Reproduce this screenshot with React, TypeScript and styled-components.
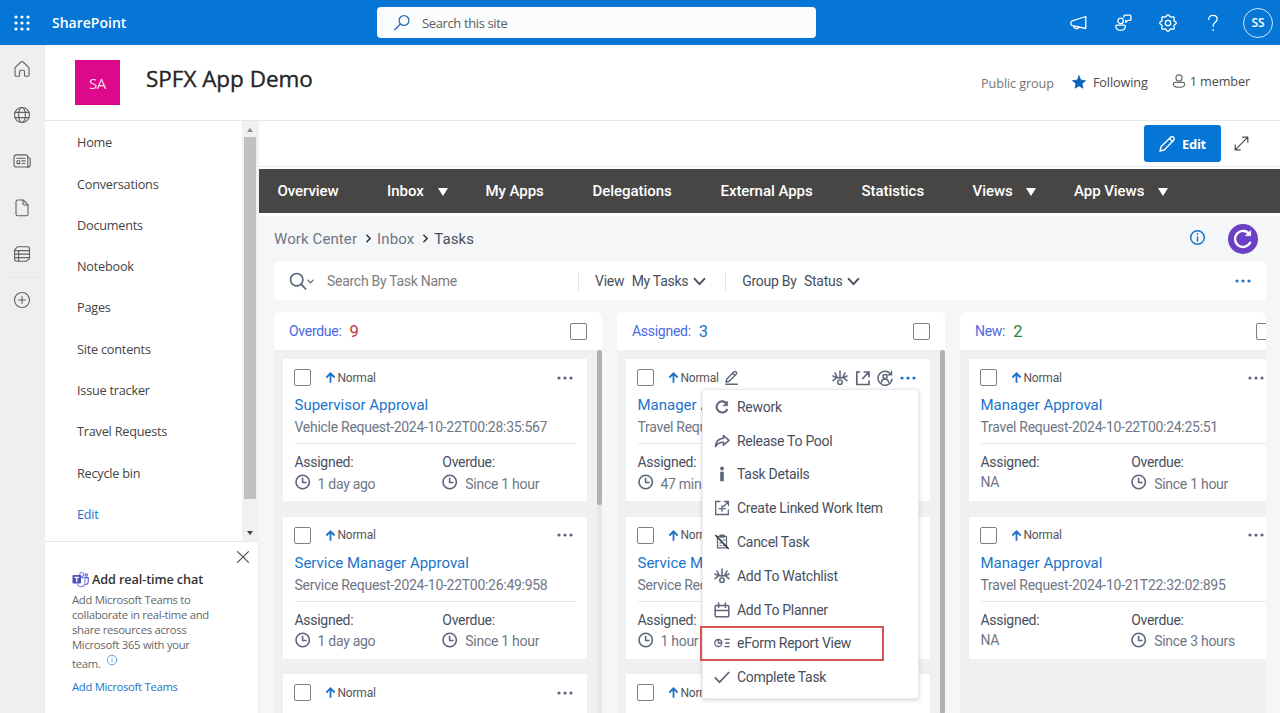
import React, {FC, ReactNode} from "react";
import styled, {createGlobalStyle, css, ThemeProvider} from "styled-components";

const theme = {
    color: {
        brand: "#0575d6",
        link: "#1b74c9",
        text: "#484f60",
        muted: "#6f7685",
        icon: "#5c657b",
        line: "#e6e7e9",
        canvas: "#f5f6f8",
        lane: "#eff0f2",
    },
    font: {
        shell: `"Open Sans", "Noto Sans", sans-serif`,
        body: `Roboto, "Liberation Sans", sans-serif`,
    },
};

const GlobalStyle = createGlobalStyle`
    * {
        box-sizing: border-box;
    }

    body {
        margin: 0;
        background: #fff;
        overflow: hidden;
    }
`;

/* ---------- icons ---------- */

interface IconProps {
    size?: number;
    width?: number;
    view?: number;
    children?: ReactNode;
}

const Svg = styled.svg`
    display: block;
    flex: none;
    fill: none;
    stroke: currentColor;
    stroke-linecap: round;
    stroke-linejoin: round;
`;

const Icon: FC<IconProps> = ({size = 18, width = 1.1, view = 18, children}) => (
    <Svg width={size} height={size} viewBox={`0 0 ${view} ${view}`} strokeWidth={width}>
        {children}
    </Svg>
);

const WaffleIcon = () => (
    <Icon>
        {[3, 9, 15].map(y => [3, 9, 15].map(x => (
            <circle key={`${x}-${y}`} cx={x} cy={y} r={1.6} fill="currentColor" stroke="none" />
        )))}
    </Icon>
);

const HomeIcon = () => (
    <Icon>
        <path d="M2 7.6 7.9 2q1.1-.9 2.2 0L16 7.6V15q0 1.3-1.3 1.3h-2q-1.2 0-1.2-1.3v-3.2q0-1.6-1.5-1.6H8q-1.5 0-1.5 1.6V15q0 1.3-1.2 1.3h-2Q2 16.3 2 15Z" />
    </Icon>
);

const GlobeIcon = () => (
    <Icon>
        <circle cx="9" cy="9" r="7.5" />
        <ellipse cx="9" cy="9" rx="3.4" ry="7.5" />
        <path d="M2 6.4h14M2 11.6h14" />
    </Icon>
);

const NewsIcon = () => (
    <Icon>
        <path d="M3.6 2.9h9.2q2 0 2 2v8.4q0 1.7 1.1 1.7h-12Q1 15 1 12.8V5q0-2.1 2.6-2.1Z" />
        <path d="M14.8 5.2q2.4 0 2.4 2v5.2q0 2.6-2.5 2.6M3.8 6.3h8.2M9 8.9h3M9 11.5h3" />
        <rect x="4" y="8.8" width="2.8" height="2.8" />
    </Icon>
);

const FileIcon = () => (
    <Icon>
        <path d="M4.8 1h5.4l4.8 4.8V15q0 1.8-1.8 1.8H4.8Q3 16.8 3 15V2.8Q3 1 4.8 1Z" />
        <path d="M10 1.2v3.4q0 1.4 1.4 1.4h3.4" />
    </Icon>
);

const ListIcon = () => (
    <Icon>
        <path d="M4.5 1.8h9.8q2.2 0 2.2 2.2v9.4l-2.8 2.8H4q-2.4 0-2.4-2.4V4.7Z" />
        <path d="M1.8 5.6h14.6M1.8 9.1h14.6M1.8 12.6h14.6M5.6 5.6v10.4" />
    </Icon>
);

const PlusIcon = () => (
    <Icon>
        <circle cx="9" cy="9" r="7.5" />
        <path d="M9 5.6v6.8M5.6 9h6.8" />
    </Icon>
);

const MegaphoneIcon = () => (
    <Icon width={1.3}>
        <path d="M16.8 2.5v12L3.2 11.6Q1.8 11.2 1.8 9.4t1.4-2.6Z" />
        <path d="M5 12.1q.1 2.7 2.3 2.7 1.8 0 2.6-1.8" />
    </Icon>
);

const FeedbackIcon = () => (
    <Icon width={1.3}>
        <circle cx="6.6" cy="6.9" r="2.7" />
        <path d="M2.6 11.2h7.8q1 0 1 1.1 0 4-4.8 4t-4.8-4q0-1.1.8-1.1ZM9.9 3V2.2q0-1 1-1h5q1 0 1 1v3.2q0 1-1 1h-2l-2.2 1.8V6.3" />
    </Icon>
);

const gearPoints = Array.from({length: 32}, (_, i) => {
    const radius = i % 4 < 2 ? 8.2 : 6.6;
    const angle = (i - 0.5) * Math.PI / 16;
    return `${(9 + radius * Math.cos(angle)).toFixed(2)},${(9 + radius * Math.sin(angle)).toFixed(2)}`;
}).join(" ");

const GearIcon = () => (
    <Icon width={1.3}>
        <circle cx="9" cy="9" r="2.7" />
        <polygon points={gearPoints} />
    </Icon>
);

const HelpIcon = () => (
    <Icon width={1.3}>
        <path d="M4.7 5.4Q4.9 1.3 9 1.3T13.2 5q0 1.7-1.9 3.2T9.2 11v1.2" />
        <circle cx="9.2" cy="15.9" r=".9" fill="currentColor" stroke="none" />
    </Icon>
);

const LoupeIcon = () => (
    <Icon width={1.3}>
        <circle cx="11" cy="6.5" r="4.9" />
        <path d="M7.4 10 1.8 15.7" />
    </Icon>
);

const StarIcon = () => (
    <Icon size={14}>
        <path fill="currentColor" d="m9 1.2 2.3 5.5 6 .5-4.5 3.9 1.3 5.8L9 13.8l-5.1 3.1 1.3-5.8L.7 7.2l6-.5Z" />
    </Icon>
);

const MemberIcon = () => (
    <Icon size={14} width={1.4}>
        <circle cx="9" cy="5" r="3.9" />
        <path d="M4.3 10.8h9.4q2.6 0 2.6 1.9 0 4.4-7.3 4.4t-7.3-4.4q0-1.9 2.6-1.9Z" />
    </Icon>
);

const PencilIcon = () => (
    <Icon width={1.4}>
        <path d="m2 16 1-4.2L12.9 2q1.3-1 2.6.2 1.3 1.3.4 2.7L6.2 15ZM11.5 3.6l3 3" />
    </Icon>
);

const ExpandIcon = () => (
    <Icon size={17} width={1.2}>
        <path d="M2.5 15.5 15.5 2.5M10.3 2.3h5.4v5.4M2.3 10.3v5.4h5.4" />
    </Icon>
);

const CloseIcon = () => (
    <Icon size={14} width={1.4}>
        <path d="m2 2 14 14M16 2 2 16" />
    </Icon>
);

const InfoIcon: FC<{size?: number; width?: number}> = ({size = 17, width = 1.6}) => (
    <Icon size={size} width={width}>
        <circle cx="9" cy="9" r="7.2" />
        <path d="M9 8.4v4.2M9 5.4v.1" />
    </Icon>
);

const TeamsIcon = () => (
    <Icon size={17}>
        <circle cx="10.3" cy="3.6" r="2.1" stroke="#7b83eb" />
        <circle cx="15.1" cy="4.2" r="1.3" stroke="#5059c9" />
        <path stroke="#5059c9" d="M13.5 7h3.7v4.3q0 2.6-2.8 2.9" />
        <path stroke="#7b83eb" d="M9 7h4.7v5.6q-.3 4-4.2 4-2.8 0-3.9-2.2" />
        <rect x=".5" y="4.3" width="9" height="9" rx="1" fill="#4b53bc" stroke="none" />
        <path stroke="#fff" strokeWidth={1.3} d="M3 6.7h4M5 6.7v4.3" />
    </Icon>
);

const RefreshIcon = () => (
    <Icon size={22} view={22} width={2.3}>
        <path d="M17.5 6.2A8 8 0 1 0 18.2 14.6" />
        <path d="M18.6 3v4.7h-4.8Z" fill="currentColor" strokeWidth={0.8} />
    </Icon>
);

const FilterLoupeIcon = () => (
    <Icon size={18} width={1.7}>
        <circle cx="7.7" cy="7.7" r="6.2" />
        <path d="m12.2 12.2 4.3 4.6" />
    </Icon>
);

const ChevronIcon: FC<{size: number; width: number}> = ({size, width}) => (
    <Icon size={size} width={width} view={12}>
        <path d="m1.5 3.5 4.5 5 4.5-5" />
    </Icon>
);

const CrumbIcon = () => (
    <Icon size={9} width={1.7} view={10}>
        <path d="m3.2 1.3 3.7 3.7-3.7 3.7" />
    </Icon>
);

const ArrowUpIcon = () => (
    <Icon size={11} width={2} view={12}>
        <path strokeLinecap="butt" strokeLinejoin="miter" d="M6 11.8V1.8M1.5 6 6 1.5 10.5 6" />
    </Icon>
);

const ClockIcon = () => (
    <Icon size={16} width={1.6} view={16}>
        <circle cx="7.7" cy="8" r="6.7" />
        <path strokeLinecap="butt" d="M7.6 3.8v4.7h4" />
    </Icon>
);

const DotsIcon = () => (
    <Icon size={16} view={16}>
        {[2, 8, 14].map(x => <circle key={x} cx={x} cy={8} r={1.6} fill="currentColor" stroke="none" />)}
    </Icon>
);

const EditIcon = () => (
    <Icon size={15} width={1.5} view={16}>
        <path d="M2.2 12.3 3 9.5 10.7 1.8q.9-.7 1.8.1l.7.8q.8.9 0 1.7L5.5 12l-3.3.8ZM9.3 3.3l2.6 2.6M2 15.2h12.3" />
    </Icon>
);

const WatchIcon = () => (
    <Icon size={16} width={1.5} view={16}>
        <path d="M1 6q3.200 2 7 2t7-2M8 1v6.500M3 3l1.900 3.600M13 3l-1.900 3.600M1 10.600l2.600-2M15 10.600l-2.600-2" />
        <circle cx="8" cy="12.300" r="2.200" />
    </Icon>
);

const OpenIcon = () => (
    <Icon size={16} width={1.7} view={16}>
        <path strokeLinejoin="miter" strokeLinecap="butt" d="M5.3 2H1.8v12.5H14V10.5M7.3 9l6-6.3M8.6 2h5.4v5.3" />
    </Icon>
);

const ReassignIcon = () => (
    <Icon size={16} width={1.5} view={16}>
        <path d="M13.8 4.2A7 7 0 1 0 15 9.2M14.5 1.3v3.500H11" />
        <circle cx="8" cy="6.500" r="2" />
        <path d="M4.500 12.300q.3-3.300 3.500-3.300t3.500 3.300" />
    </Icon>
);

const ReworkIcon = () => (
    <Icon size={16} width={2.1} view={16}>
        <path d="M12.7 4.6A5.6 5.6 0 1 0 13.4 10" strokeLinecap="butt" />
        <path d="M13.6 2.3v4.5H9.2Z" fill="currentColor" strokeWidth={0.6} />
    </Icon>
);

const ReleaseIcon = () => (
    <Icon size={16} width={1.6} view={16}>
        <path d="M9.5 2.5 15 7.3l-5.5 4.8V9.3Q4.5 9 1.5 13.5 2 6 9.5 5.3Z" />
    </Icon>
);

const DetailsIcon = () => (
    <Icon size={16} view={16}>
        <circle cx="8" cy="2.5" r="1.9" fill="currentColor" stroke="none" />
        <path d="M6.2 5.7h3.6v9.6H6.2Z" fill="currentColor" stroke="none" />
    </Icon>
);

const LinkedIcon = () => (
    <Icon size={16} width={1.3} view={16}>
        <path strokeLinejoin="miter" d="M6 1.5H1.7v13h12.6V9.8M8 5.3v6M5 8.7h6.3M9.6 6.5l4.3-4.4M10.4 1.5h4v4" />
    </Icon>
);

const CancelIcon = () => (
    <Icon size={16} width={1.2} view={16}>
        <path d="M4 2.3h8.5v11.5H3.5V2.3M6 1.2h4.2v2H6ZM5.8 6h1M9 6h2M5.8 8.8h1.5M5.8 11.5h1M9 11.5h1.5" />
        <path stroke="#2f3542" strokeWidth={1.6} d="M1.8 1.5 14.3 14.5" />
    </Icon>
);

const PlannerIcon = () => (
    <Icon size={16} width={1.5} view={16}>
        <rect x="1.2" y="3.5" width="13.6" height="11.3" rx="1" />
        <path d="M1.2 8.6h13.6M4.6 1v4.6M11.4 1v4.6" />
    </Icon>
);

const ReportIcon = () => (
    <Icon size={16} width={1.3} view={16}>
        <circle cx="4.3" cy="8" r="3.5" />
        <path d="M4.3 4.8V8h3.2M11 4.3h4.2M11.8 8h3.4M11 11.7h4.2" />
    </Icon>
);

const CheckIcon = () => (
    <Icon size={16} width={1.7} view={16}>
        <path strokeLinecap="butt" strokeLinejoin="miter" d="m.8 8.3 4.7 4.9L15.2 3" />
    </Icon>
);

/* ---------- shell ---------- */

const Page = styled.div`
    display: grid;
    grid-template-columns: 45px 1fr;
    grid-template-rows: 45px 668px;
    width: 1280px;
    height: 713px;
    overflow: hidden;
    font-family: ${props => props.theme.font.shell};
    color: #333;
`;

const SuiteBar = styled.header`
    grid-column: 1 / 3;
    display: flex;
    align-items: center;
    padding: 0 7px 0 13px;
    background: ${props => props.theme.color.brand};
    color: #fff;
`;

const Brand = styled.div`
    width: 325px;
    margin-left: 21px;
    font-size: 14px;
    font-weight: 600;
`;

const SiteSearch = styled.div`
    display: flex;
    align-items: center;
    gap: 11px;
    width: 439px;
    height: 31px;
    padding-left: 16px;
    border-radius: 4px;
    background: #fafcfe;
    color: #2b6cb0;

    span {
        color: #5c5c5c;
        font-size: 13px;
        letter-spacing: -0.38px;
    }
`;

const SuiteActions = styled.div`
    display: flex;
    align-items: center;
    gap: 27px;
    margin-left: auto;
`;

const Avatar = styled.div`
    display: grid;
    place-items: center;
    width: 30px;
    height: 30px;
    margin-left: -6px;
    border: 1px solid #d5e7f8;
    border-radius: 50%;
    font-size: 12px;
    font-weight: 600;
`;

const Rail = styled.aside`
    display: flex;
    flex-direction: column;
    align-items: center;
    gap: 28.2px;
    padding: 15px 1px 0 0;
    background: #efefef;
    color: #616161;
`;

const RailBreak = styled.hr`
    width: 35px;
    margin: -14px 0 -15.2px;
    border: 0;
    border-top: 1px solid #e6e6e6;
`;

const Site = styled.div`
    display: grid;
    grid-template-rows: 76px 592px;
    min-width: 0;
`;

const SiteHeader = styled.div`
    display: flex;
    align-items: center;
    padding: 0 30px;
    border-bottom: 1px solid #e8e8e8;
`;

const SiteLogo = styled.div`
    display: grid;
    place-items: center;
    width: 45px;
    height: 45px;
    background: #dc0a8b;
    color: #fbd9ee;
    font-size: 15px;
    letter-spacing: -0.3px;
`;

const SiteTitle = styled.h1`
    margin: -8px auto 0 26px;
    color: #252525;
    font-size: 22.5px;
    font-weight: 500;
    letter-spacing: -0.03px;
    -webkit-text-stroke: 0.35px currentColor;
`;

const SiteMeta = styled.div<{$gap?: number; $left?: number; $shift?: number}>`
    display: flex;
    align-items: center;
    gap: ${props => props.$gap ?? 0}px;
    margin-left: ${props => props.$left ?? 0}px;
    padding-bottom: ${props => props.$shift ?? 0}px;
    color: #4a4a4a;
    font-size: 12.7px;
    letter-spacing: -0.12px;
    white-space: nowrap;

    svg {
        color: ${props => props.$gap === 7 ? "#0b62b8" : "#666"};
    }

    &:nth-of-type(2) {
        color: #767676;
    }
`;

const Columns = styled.div`
    display: grid;
    grid-template-columns: 214px 1fr;
    min-width: 0;
`;

/* ---------- left navigation ---------- */

const Side = styled.div`
    display: grid;
    grid-template-rows: 421px 1fr;
    border-right: 1px solid #f0f1f3;
`;

const SideScroller = styled.div`
    display: flex;
    border-bottom: 1px solid #e8e8e8;
`;

const SideNav = styled.nav`
    flex: 1;
    padding: 1.4px 0 0 32px;
`;

const SideLink = styled.div<{$accent?: boolean}>`
    height: 41.28px;
    line-height: 41px;
    color: ${props => props.$accent ? props.theme.color.link : "#444"};
    font-size: 12.7px;
    letter-spacing: -0.22px;
`;

const SideScroll = styled.div`
    display: flex;
    flex-direction: column;
    align-items: center;
    justify-content: space-between;
    width: 16px;
    padding: 7px 0 6px;
    background: #f1f1f1;
`;

const Triangle = styled.i<{$up?: boolean; $color: string; $w?: number; $h?: number}>`
    width: 0;
    border: solid transparent;
    border-width: 0 ${props => props.$w ?? 3.5}px;
    ${props => props.$up
        ? css`border-bottom: ${props.$h ?? 4}px solid ${props.$color};`
        : css`border-top: ${props.$h ?? 4}px solid ${props.$color};`}
`;

const SideThumb = styled.div`
    width: 12px;
    height: 362px;
    margin: 5px 0 auto;
    background: #c1c1c1;
`;

const Promo = styled.section`
    display: flex;
    flex-direction: column;
    align-items: flex-start;
    padding: 8px 8px 0 27px;
    color: #666;
    font-size: 11.3px;
    line-height: 15px;
    letter-spacing: -0.3px;
`;

const PromoClose = styled.div`
    align-self: flex-end;
    color: #444;
`;

const PromoTitle = styled.div`
    display: flex;
    align-items: center;
    gap: 3px;
    margin: 7px 0 4px;
    color: #333;
    font-size: 12.7px;
    font-weight: 600;
    letter-spacing: -0.12px;
`;

const PromoText = styled.div`
    white-space: nowrap;
`;

const PromoLast = styled(PromoText)`
    display: flex;
    gap: 5px;
    height: 20px;
    padding-top: 4px;

    svg {
        margin-top: -2px;
        color: #4b9ae0;
    }
`;

const PromoLink = styled.div`
    margin-top: 7px;
    color: ${props => props.theme.color.link};
`;

/* ---------- main area ---------- */

const Main = styled.main`
    display: grid;
    grid-template-rows: 46px 2px 44px 500px;
    min-width: 0;
    font-family: ${props => props.theme.font.body};
`;

const CommandBar = styled.div`
    display: flex;
    align-items: center;
    justify-content: flex-end;
    gap: 12px;
    padding-right: 30px;
    border-bottom: 1px solid #ebebeb;
    color: #444;
`;

const EditButton = styled.button`
    display: flex;
    align-items: center;
    gap: 6px;
    width: 77px;
    height: 37px;
    padding: 0 0 0 14px;
    border: 0;
    border-radius: 3px;
    background: ${props => props.theme.color.brand};
    color: #fff;
    font: 700 13px ${props => props.theme.font.shell};
    letter-spacing: -0.3px;
`;

const Menubar = styled.nav`
    grid-row: 3;
    display: flex;
    align-items: center;
    padding-left: 18.5px;
    background: #484644;
    color: #fff;
    font-size: 15px;
    font-weight: 500;
    letter-spacing: -0.05px;
`;

const MenubarItem = styled.div<{$w: number}>`
    display: flex;
    align-items: center;
    justify-content: space-between;
    width: ${props => props.$w}px;
    margin-right: 49px;
    white-space: nowrap;

    & > i {
        margin-top: 2px;
    }

    &:has(> i) {
        margin-right: 38px;
    }
`;

const Workspace = styled.div`
    grid-row: 4;
    display: flex;
    flex-direction: column;
    margin-top: 3px;
    padding: 7px 14px 0 15px;
    background: ${props => props.theme.color.canvas};
    color: ${props => props.theme.color.text};
    min-width: 0;
`;

const CrumbRow = styled.div`
    display: flex;
    align-items: center;
    flex: none;
    height: 31px;
    padding-right: 8px;
    color: ${props => props.theme.color.muted};
    font-size: 15px;
    letter-spacing: 0.1px;
`;

const Crumb = styled.span<{$current?: boolean}>`
    padding-top: 1px;
    ${props => props.$current && css`color: ${props.theme.color.text};`}

    & + svg {
        margin: 0 4px 0 7px;
        color: #333;
    }
`;

const HelpLink = styled.div`
    margin: -3px 22px 0 auto;
    color: #1b74c9;
`;

const RefreshButton = styled.div`
    display: grid;
    place-items: center;
    width: 30px;
    height: 30px;
    border-radius: 50%;
    background: #6b3fc6;
    color: #fff;
`;

const FilterBar = styled.div`
    display: flex;
    align-items: center;
    flex: none;
    height: 38px;
    margin-top: 8px;
    padding: 0 15px;
    border-radius: 4px;
    background: #fff;
    color: ${props => props.theme.color.icon};
    font-size: 14px;
    letter-spacing: -0.28px;
`;

const FilterInput = styled.div`
    width: 251px;
    margin-left: 13px;
    color: #7d7d7d;
`;

const FilterPick = styled.div`
    display: flex;
    align-items: center;
    gap: 5px;
    height: 19px;
    padding: 0 19px 0 16px;
    border-left: 1.5px solid #e2e4e8;
    color: ${props => props.theme.color.text};

    span {
        margin-right: 2.5px;
    }
`;

const FilterMore = styled.div`
    margin-left: auto;
    color: ${props => props.theme.color.link};
`;

const Board = styled.div`
    display: flex;
    gap: 15px;
    margin-top: 12px;
    border-radius: 0 6px 0 0;
    overflow: hidden;
`;

const Lane = styled.section`
    display: grid;
    grid-template-rows: 38px 364px;
    flex: none;
    width: 328px;
`;

const LaneHeader = styled.div`
    display: flex;
    align-items: center;
    padding: 0 15px;
    border-radius: 6px 6px 0 0;
    background: #fff;
    color: #4a6ae0;
    font-size: 14px;
    letter-spacing: -0.28px;
`;

const LaneCount = styled.span<{$color: string}>`
    margin: 0 auto 0 8px;
    color: ${props => props.$color};
    font-size: 16.5px;
`;

const CheckBox = styled.span`
    flex: none;
    width: 17px;
    height: 17px;
    border: 1px solid #7c8088;
    border-radius: 2px;
    background: #fff;
`;

const LaneBody = styled.div`
    display: flex;
    background: ${props => props.theme.color.lane};
    overflow: hidden;
`;

const Cards = styled.div`
    flex: 1;
    display: flex;
    flex-direction: column;
    gap: 15.7px;
    padding: 9px 9.5px 0 9px;
`;

const LaneTrack = styled.div`
    width: 5.5px;
    background: #e6e7e9;
`;

const LaneThumb = styled.div<{$h: number}>`
    height: ${props => props.$h}px;
    border-radius: 3px;
    background: #b1b1b1;
`;

const CardBox = styled.article`
    flex: none;
    height: 142px;
    padding: 0 11px 0 11.5px;
    background: #fff;
    font-size: 14px;
    letter-spacing: -0.28px;
`;

const CardTop = styled.div`
    display: flex;
    align-items: center;
    height: 37px;
    margin-left: -0.5px;
    color: ${props => props.theme.color.icon};
`;

const Priority = styled.div`
    display: flex;
    align-items: center;
    gap: 2px;
    margin: 0 auto 0 13.5px;
    color: #555;
    font-size: 12px;
    letter-spacing: -0.2px;

    svg:first-child {
        color: ${props => props.theme.color.link};
    }

    svg + svg {
        margin-left: 3px;
        color: ${props => props.theme.color.icon};
    }
`;

const CardActions = styled.div<{$active?: boolean}>`
    display: flex;
    align-items: center;
    gap: 6.5px;
    margin-right: 3.5px;

    svg:last-child {
        color: ${props => props.$active ? "#1372d0" : props.theme.color.icon};
    }
`;

const CardTitle = styled.div`
    height: 20px;
    line-height: 19px;
    color: ${props => props.theme.color.link};
    font-size: 15px;
    letter-spacing: 0;
    white-space: nowrap;
`;

const CardSubject = styled.div`
    height: 28px;
    border-bottom: 1px solid ${props => props.theme.color.line};
    line-height: 22px;
    color: ${props => props.theme.color.muted};
    white-space: nowrap;
`;

const CardFacts = styled.div`
    display: grid;
    grid-template-columns: 52.5% 1fr;
`;

const FactLabel = styled.div`
    margin-top: 8px;
    line-height: 20px;
    color: ${props => props.theme.color.text};
`;

const FactValue = styled.div`
    display: flex;
    gap: 7px;
    line-height: 20px;
    color: ${props => props.theme.color.muted};
    white-space: nowrap;

    svg {
        margin-top: 2px;
        color: ${props => props.theme.color.icon};
    }

    span {
        padding-top: 1.5px;
    }
`;

/* ---------- task menu ---------- */

const MenuAnchor = styled.div`
    position: absolute;
    left: 702px;
    top: 389px;
    width: 217px;
    height: 310px;
    border: 1px solid #ececf0;
    border-radius: 3px;
    background: #fff;
    box-shadow: 0 1px 4px rgba(0, 0, 0, 0.18);
    font-family: ${props => props.theme.font.body};
`;

const MenuItem = styled.div<{$marked?: boolean}>`
    display: flex;
    align-items: center;
    gap: 7px;
    height: 33.8px;
    padding-left: 11px;
    color: ${props => props.theme.color.text};
    font-size: 14px;
    letter-spacing: -0.28px;

    svg {
        color: ${props => props.theme.color.icon};
    }

    ${props => props.$marked && css`
        width: 184px;
        height: 35px;
        margin: -0.6px 0 -0.6px -3px;
        padding-left: 12px;
        border: 2px solid #d9534f;
    `}
`;

/* ---------- data ---------- */

interface Task {
    title: string;
    subject: string;
    assigned: string;
    overdue: string;
    active?: boolean;
}

interface LaneData {
    name: string;
    count: number;
    color: string;
    thumb?: number;
    tasks: Task[];
}

const sideLinks = [
    "Home", "Conversations", "Documents", "Notebook", "Pages",
    "Site contents", "Issue tracker", "Travel Requests", "Recycle bin",
];

const tabs = [
    {name: "Overview", width: 60.5},
    {name: "Inbox", width: 60.5, caret: true},
    {name: "My Apps", width: 58},
    {name: "Delegations", width: 79},
    {name: "External Apps", width: 92},
    {name: "Statistics", width: 62},
    {name: "Views", width: 63.5, caret: true},
    {name: "App Views", width: 94, caret: true},
];

const lanes: LaneData[] = [
    {
        name: "Overdue:", count: 9, color: "#bf3b3b", thumb: 155,
        tasks: [
            {title: "Supervisor Approval", subject: "Vehicle Request-2024-10-22T00:28:35:567", assigned: "1 day ago", overdue: "Since 1 hour"},
            {title: "Service Manager Approval", subject: "Service Request-2024-10-22T00:26:49:958", assigned: "1 day ago", overdue: "Since 1 hour"},
            {title: "", subject: "", assigned: "", overdue: ""},
        ],
    },
    {
        name: "Assigned:", count: 3, color: "#1b74c9", thumb: 364,
        tasks: [
            {title: "Manager Approval", subject: "Travel Request", assigned: "47 minutes", overdue: "", active: true},
            {title: "Service Manager Approval", subject: "Service Request", assigned: "1 hour", overdue: ""},
            {title: "", subject: "", assigned: "", overdue: ""},
        ],
    },
    {
        name: "New:", count: 2, color: "#1e8540",
        tasks: [
            {title: "Manager Approval", subject: "Travel Request-2024-10-22T00:24:25:51", assigned: "NA", overdue: "Since 1 hour"},
            {title: "Manager Approval", subject: "Travel Request-2024-10-21T22:32:02:895", assigned: "NA", overdue: "Since 3 hours"},
        ],
    },
];

const menuItems = [
    {name: "Rework", icon: <ReworkIcon />},
    {name: "Release To Pool", icon: <ReleaseIcon />},
    {name: "Task Details", icon: <DetailsIcon />},
    {name: "Create Linked Work Item", icon: <LinkedIcon />},
    {name: "Cancel Task", icon: <CancelIcon />},
    {name: "Add To Watchlist", icon: <WatchIcon />},
    {name: "Add To Planner", icon: <PlannerIcon />},
    {name: "eForm Report View", icon: <ReportIcon />, marked: true},
    {name: "Complete Task", icon: <CheckIcon />},
];

/* ---------- components ---------- */

const Fact: FC<{label: string; value: string}> = ({label, value}) => (
    <div>
        <FactLabel>{label}</FactLabel>
        <FactValue>
            {value === "NA" ? value : <><ClockIcon /><span>{value}</span></>}
        </FactValue>
    </div>
);

const Card: FC<{task: Task}> = ({task}) => (
    <CardBox>
        <CardTop>
            <CheckBox />
            <Priority>
                <ArrowUpIcon />
                Normal
                {task.active && <EditIcon />}
            </Priority>
            <CardActions $active={task.active}>
                {task.active && <><WatchIcon /><OpenIcon /><ReassignIcon /></>}
                <DotsIcon />
            </CardActions>
        </CardTop>
        <CardTitle>{task.title}</CardTitle>
        <CardSubject>{task.subject}</CardSubject>
        <CardFacts>
            {task.assigned && <Fact label="Assigned:" value={task.assigned} />}
            {task.overdue && <Fact label="Overdue:" value={task.overdue} />}
        </CardFacts>
    </CardBox>
);

const TaskMenu: FC = () => (
    <MenuAnchor>
        {menuItems.map(item => (
            <MenuItem key={item.name} $marked={item.marked}>
                {item.icon}
                {item.name}
            </MenuItem>
        ))}
    </MenuAnchor>
);

const LeftNav: FC = () => (
    <Side>
        <SideScroller>
            <SideNav>
                {sideLinks.map(link => <SideLink key={link}>{link}</SideLink>)}
                <SideLink $accent>Edit</SideLink>
            </SideNav>
            <SideScroll>
                <Triangle $up $color="#8b8b8b" />
                <SideThumb />
                <Triangle $color="#404040" />
            </SideScroll>
        </SideScroller>
        <Promo>
            <PromoClose><CloseIcon /></PromoClose>
            <PromoTitle><TeamsIcon />Add real-time chat</PromoTitle>
            <PromoText>Add Microsoft Teams to</PromoText>
            <PromoText>collaborate in real-time and</PromoText>
            <PromoText>share resources across</PromoText>
            <PromoText>Microsoft 365 with your</PromoText>
            <PromoLast>team. <InfoIcon size={12} width={1.3} /></PromoLast>
            <PromoLink>Add Microsoft Teams</PromoLink>
        </Promo>
    </Side>
);

const App: FC = () => (
    <ThemeProvider theme={theme}>
        <GlobalStyle />
        <Page>
            <SuiteBar>
                <WaffleIcon />
                <Brand>SharePoint</Brand>
                <SiteSearch><LoupeIcon /><span>Search this site</span></SiteSearch>
                <SuiteActions>
                    <MegaphoneIcon />
                    <FeedbackIcon />
                    <GearIcon />
                    <HelpIcon />
                    <Avatar>SS</Avatar>
                </SuiteActions>
            </SuiteBar>
            <Rail>
                <HomeIcon />
                <GlobeIcon />
                <NewsIcon />
                <FileIcon />
                <ListIcon />
                <RailBreak />
                <PlusIcon />
            </Rail>
            <Site>
                <SiteHeader>
                    <SiteLogo>SA</SiteLogo>
                    <SiteTitle>SPFX App Demo</SiteTitle>
                    <SiteMeta>Public group</SiteMeta>
                    <SiteMeta $left={18} $gap={7} $shift={2}><StarIcon />Following</SiteMeta>
                    <SiteMeta $left={24} $gap={4} $shift={4}><MemberIcon />1 member</SiteMeta>
                </SiteHeader>
                <Columns>
                    <LeftNav />
                    <Main>
                        <CommandBar>
                            <EditButton><PencilIcon />Edit</EditButton>
                            <ExpandIcon />
                        </CommandBar>
                        <Menubar>
                            {tabs.map(tab => (
                                <MenubarItem key={tab.name} $w={tab.width}>
                                    {tab.name}
                                    {tab.caret && <Triangle $color="#fff" $w={5} $h={8} />}
                                </MenubarItem>
                            ))}
                        </Menubar>
                        <Workspace>
                            <CrumbRow>
                                <Crumb>Work Center</Crumb>
                                <CrumbIcon />
                                <Crumb>Inbox</Crumb>
                                <CrumbIcon />
                                <Crumb $current>Tasks</Crumb>
                                <HelpLink><InfoIcon /></HelpLink>
                                <RefreshButton><RefreshIcon /></RefreshButton>
                            </CrumbRow>
                            <FilterBar>
                                <FilterLoupeIcon />
                                <ChevronIcon size={7} width={2} />
                                <FilterInput>Search By Task Name</FilterInput>
                                <FilterPick>
                                    <span>View</span>My Tasks<ChevronIcon size={13} width={1.8} />
                                </FilterPick>
                                <FilterPick>
                                    <span>Group By</span>Status<ChevronIcon size={13} width={1.8} />
                                </FilterPick>
                                <FilterMore><DotsIcon /></FilterMore>
                            </FilterBar>
                            <Board>
                                {lanes.map(lane => (
                                    <Lane key={lane.name}>
                                        <LaneHeader>
                                            {lane.name}
                                            <LaneCount $color={lane.color}>{lane.count}</LaneCount>
                                            <CheckBox />
                                        </LaneHeader>
                                        <LaneBody>
                                            <Cards>
                                                {lane.tasks.map((task, i) => <Card key={i} task={task} />)}
                                            </Cards>
                                            {lane.thumb && (
                                                <LaneTrack><LaneThumb $h={lane.thumb} /></LaneTrack>
                                            )}
                                        </LaneBody>
                                    </Lane>
                                ))}
                            </Board>
                        </Workspace>
                    </Main>
                </Columns>
            </Site>
        </Page>
        <TaskMenu />
    </ThemeProvider>
);

export default App;
